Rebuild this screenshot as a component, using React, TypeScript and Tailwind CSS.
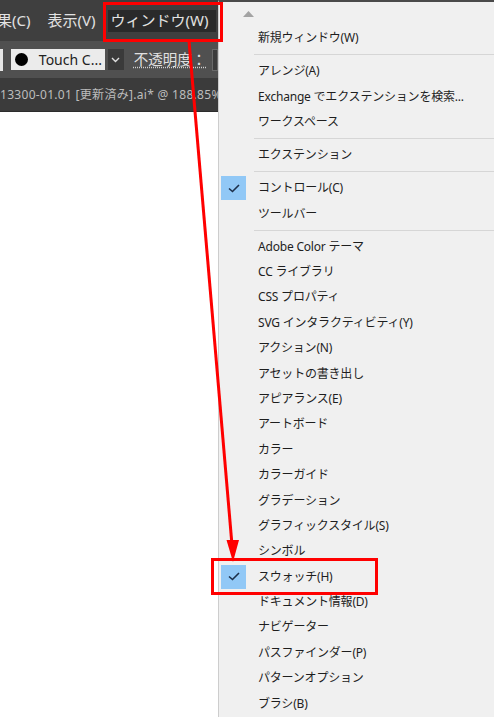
import React from "react";

type Entry = { label?: string; checked?: boolean; sep?: boolean };

const entries: Entry[] = [
  { label: "新規ウィンドウ(W)" },
  { sep: true },
  { label: "アレンジ(A)" },
  { label: "Exchange でエクステンションを検索..." },
  { label: "ワークスペース" },
  { sep: true },
  { label: "エクステンション" },
  { sep: true },
  { label: "コントロール(C)", checked: true },
  { label: "ツールバー" },
  { sep: true },
  { label: "Adobe Color テーマ" },
  { label: "CC ライブラリ" },
  { label: "CSS プロパティ" },
  { label: "SVG インタラクティビティ(Y)" },
  { label: "アクション(N)" },
  { label: "アセットの書き出し" },
  { label: "アピアランス(E)" },
  { label: "アートボード" },
  { label: "カラー" },
  { label: "カラーガイド" },
  { label: "グラデーション" },
  { label: "グラフィックスタイル(S)" },
  { label: "シンボル" },
  { label: "スウォッチ(H)", checked: true },
  { label: "ドキュメント情報(D)" },
  { label: "ナビゲーター" },
  { label: "パスファインダー(P)" },
  { label: "パターンオプション" },
  { label: "ブラシ(B)" },
];

function Check() {
  return (
    <div className="w-[25px] h-[24px] bg-[#91c8f6] flex items-center justify-center">
      <svg width="12" height="9" viewBox="0 0 12 9">
        <polyline points="1,4.5 4.5,7.5 11,1" fill="none" stroke="#1c2f4a" strokeWidth="1.6" />
      </svg>
    </div>
  );
}

export default function App() {
  return (
    <div className="relative w-[494px] h-[717px] overflow-hidden flex bg-white font-['Noto_Sans','Noto_Sans_CJK_JP',sans-serif]">
      {/* Illustrator window, left part */}
      <div className="w-[218px] shrink-0 flex flex-col">
        {/* menu bar */}
        <div className="h-[41px] bg-[#3f3f3f] flex items-center text-[15px] text-[#e2e2e2] whitespace-nowrap">
          <span className="ml-[-3px]">果(C)</span>
          <span className="ml-[17px]">表示(V)</span>
          <span className="ml-[12px] h-[22px] pl-[3px] bg-[#2a2a2a] flex items-center w-[108px]">ウィンドウ(W)</span>
        </div>
        {/* control bar */}
        <div className="h-[37px] bg-[#505050] flex items-center whitespace-nowrap">
          <div className="w-[3px] h-[22px] bg-[#e6e6e6] mr-[8px]" />
          <div className="w-[99px] h-[21px] bg-[#ebebeb] flex items-center">
            <div className="ml-[4px] w-[13px] h-[13px] rounded-full bg-black" />
            <span className="ml-[11px] text-[14px] text-[#222]">Touch C...</span>
          </div>
          <div className="ml-[3px] w-[17px] h-[21px] bg-[#3a3a3a] flex items-center justify-center">
            <svg width="9" height="6" viewBox="0 0 9 6">
              <polyline points="1,1 4.5,4.5 8,1" fill="none" stroke="#e0e0e0" strokeWidth="1.4" />
            </svg>
          </div>
          <span className="ml-[10px] text-[14.5px] text-[#e0e0e0] underline decoration-dotted decoration-[#cfcfcf] underline-offset-2">
            不透明度：
          </span>
          <div className="ml-[6px] w-[6px] h-[22px] bg-[#3c3c3c] border border-[#6a6a6a]" />
        </div>
        {/* document tab */}
        <div className="h-[34px] bg-[#3b3b3b] flex items-center overflow-hidden whitespace-nowrap border-b border-[#2c2c2c]">
          <span className="ml-0 text-[12px] text-[#bdbdbd] tracking-[0.3px]">
            13300-01.01 [更新済み].ai* @ 188.85% (RGB/プレビュー)
          </span>
        </div>
        <div className="flex-1 bg-white" />
      </div>

      {/* Window dropdown menu */}
      <div className="w-[276px] shrink-0 bg-[#f0f0f0] border-l border-[#cdcdcd] border-t-2 border-t-[#4a4a4a] text-[12px] tracking-[-0.2px] text-[#1e1e1e] whitespace-nowrap">
        <div className="h-[23.8px] pl-[24px] pt-[9px]">
          <svg width="11" height="6" viewBox="0 0 11 6">
            <polygon points="0,6 5.5,0 11,6" fill="#a3a3a3" />
          </svg>
        </div>
        {entries.map((e, i) =>
          e.sep ? (
            <div key={i} className="h-[7.6px] flex items-center pl-[35px]">
              <div className="h-px w-full bg-[#d6d6d6]" />
            </div>
          ) : (
            <div key={i} className="h-[25.4px] flex items-center">
              <div className="w-[39px] pl-[2px] flex items-center">{e.checked && <Check />}</div>
              <span>{e.label}</span>
            </div>
          )
        )}
      </div>

      {/* annotations */}
      <div className="absolute left-[103px] top-[2px] w-[120px] h-[40px] border-[3.5px] border-[#ff0000] pointer-events-none" />
      <div className="absolute left-[211px] top-[558px] w-[167px] h-[37px] border-[3.5px] border-[#ff0000] pointer-events-none" />
      <svg className="absolute left-0 top-0 pointer-events-none" width="494" height="717">
        <line x1="189" y1="41" x2="232" y2="545" stroke="#ff0000" strokeWidth="3" />
        <polygon points="226.5,540 239,540 233,562" fill="#ff0000" />
      </svg>
    </div>
  );
}
